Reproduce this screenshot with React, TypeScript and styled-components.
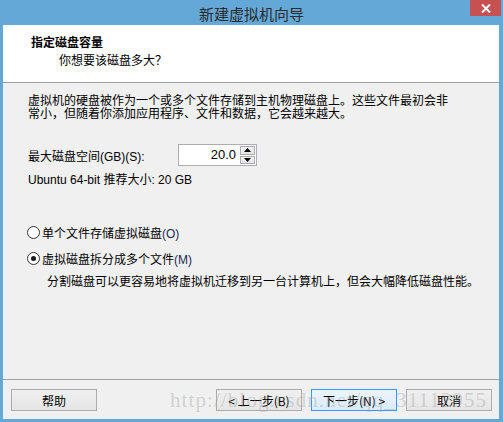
import React, { useState } from 'react';
import styled, { createGlobalStyle } from 'styled-components';

const GlobalStyle = createGlobalStyle`
  html, body {
    margin: 0;
    padding: 0;
    background: #ffffff;
  }
  body {
    font-family: "Liberation Sans", "Noto Sans CJK SC", sans-serif;
    font-size: 12px;
    color: #000;
  }
`;

const Window = styled.div`
  position: relative;
  width: 503px;
  height: 422px;
  box-sizing: border-box;
  background: #64a8d8;
  padding: 0 4px 3px 3px;
  display: flex;
  flex-direction: column;
  overflow: hidden;
`;

const TitleBar = styled.div`
  height: 25px;
  display: flex;
  align-items: center;
  justify-content: center;
  margin-left: -3px;
  margin-right: -4px;
`;

const Title = styled.div`
  font-family: "Noto Sans CJK SC", sans-serif;
  font-size: 15px;
  color: #2b2b2b;
  line-height: 25px;
  padding-top: 1px;
`;

const CloseButton = styled.div`
  position: absolute;
  top: 0;
  right: 2px;
  width: 31px;
  height: 16px;
  background: #c75050;
  display: flex;
  align-items: center;
  justify-content: center;
`;

const Client = styled.div`
  flex: 1;
  background: #f0f0f0;
  display: flex;
  flex-direction: column;
`;

const Header = styled.div`
  height: 58px;
  box-sizing: border-box;
  background: #ffffff;
  border-bottom: 1px solid #a0a0a0;
  padding: 9px 0 0 28px;
`;

const Heading = styled.div`
  font-family: "Noto Sans CJK SC", sans-serif;
  font-weight: bold;
  font-size: 12px;
  line-height: 16px;
`;

const SubHeading = styled.div`
  font-family: "Noto Sans CJK SC", sans-serif;
  font-size: 12px;
  line-height: 16px;
  margin: 2px 0 0 28px;
`;

const Body = styled.div`
  flex: 1;
  padding: 10px 0 0 25px;
  display: flex;
  flex-direction: column;
`;

const Paragraph = styled.div`
  font-family: "Noto Sans CJK SC", sans-serif;
  line-height: 13px;
  width: 426px;
`;

const FieldRow = styled.div`
  display: flex;
  align-items: center;
  margin-top: 25px;
  height: 22px;
`;

const Label = styled.span<{ $width?: number }>`
  width: ${p => p.$width ?? 150}px;
  font-size: 12px;
`;

const SpinBox = styled.div`
  width: 79px;
  height: 22px;
  box-sizing: border-box;
  border: 1px solid #abadb3;
  background: #fff;
  display: flex;
  align-items: stretch;
`;

const SpinValue = styled.div`
  flex: 1;
  text-align: right;
  padding-right: 4px;
  font-size: 13px;
  line-height: 20px;
  color: #000;
`;

const SpinButtons = styled.div`
  width: 15px;
  display: flex;
  flex-direction: column;
  gap: 1px;
  padding: 1px 1px 1px 0;
`;

const SpinButton = styled.div`
  flex: 1;
  border: 1px solid #acacac;
  background: linear-gradient(#f2f2f2, #e5e5e5);
  display: flex;
  align-items: center;
  justify-content: center;
`;

const Hint = styled.div`
  margin-top: 7px;
  line-height: 14px;
  font-size: 12px;
`;

const RadioRow = styled.label<{ $gap: number }>`
  display: flex;
  align-items: center;
  height: 16px;
  margin-top: ${p => p.$gap}px;
  margin-left: -1px;
  cursor: default;
`;

const RadioCircle = styled.span<{ $checked: boolean }>`
  width: 13px;
  height: 13px;
  box-sizing: border-box;
  border-radius: 50%;
  border: 1px solid #333;
  background: #fff;
  margin-right: 2px;
  display: flex;
  align-items: center;
  justify-content: center;
  &::after {
    content: '';
    width: 5px;
    height: 5px;
    border-radius: 50%;
    background: #1a1a1a;
    display: ${p => (p.$checked ? 'block' : 'none')};
  }
`;

const RadioText = styled.span`
  font-family: "Noto Sans CJK SC", sans-serif;
  font-size: 12px;
`;

const Mnemonic = styled.span`
  font-family: "Liberation Sans", sans-serif;
  color: #1c2a55;
`;

const Description = styled.div`
  font-family: "Noto Sans CJK SC", sans-serif;
  margin: 8px 0 0 19px;
  line-height: 14px;
`;

const Footer = styled.div`
  border-top: 1px solid #a0a0a0;
  height: 40px;
  box-sizing: border-box;
  padding: 9px 7px 0 8px;
  display: flex;
  align-items: flex-start;
`;

const Button = styled.div<{ $focused?: boolean; $ml?: number }>`
  width: 86px;
  height: 22px;
  box-sizing: border-box;
  border: 1px solid ${p => (p.$focused ? '#3399ff' : '#acacac')};
  background: ${p => (p.$focused ? 'linear-gradient(#ecf4fc, #dcecfc)' : 'linear-gradient(#f0f0f0, #e5e5e5)')};
  margin-left: ${p => p.$ml ?? 0}px;
  display: flex;
  align-items: center;
  justify-content: center;
  font-family: "Noto Sans CJK SC", sans-serif;
  font-size: 12px;
`;

const Watermark = styled.div`
  position: absolute;
  left: 170px;
  top: 388px;
  font-family: "Liberation Serif", serif;
  font-size: 21px;
  letter-spacing: 1.1px;
  color: rgba(150, 150, 150, 0.35);
  pointer-events: none;
  white-space: nowrap;
`;

function Triangle({ up }: { up: boolean }) {
  return (
    <svg width="7" height="4" viewBox="0 0 7 4">
      <path d={up ? 'M3.5 0 L7 4 L0 4 Z' : 'M0 0 L7 0 L3.5 4 Z'} fill="#000" />
    </svg>
  );
}

export default function App() {
  const [mode, setMode] = useState<'single' | 'split'>('split');

  return (
    <>
      <GlobalStyle />
      <Window>
        <TitleBar>
          <Title>新建虚拟机向导</Title>
        </TitleBar>
        <CloseButton>
          <svg width="10" height="9" viewBox="0 0 10 9">
            <path d="M1 0.5 L9 8.5 M9 0.5 L1 8.5" stroke="#fff" strokeWidth="2" />
          </svg>
        </CloseButton>
        <Client>
          <Header>
            <Heading>指定磁盘容量</Heading>
            <SubHeading>你想要该磁盘多大？</SubHeading>
          </Header>
          <Body>
            <Paragraph>
              虚拟机的硬盘被作为一个或多个文件存储到主机物理磁盘上。这些文件最初会非常小，但随着你添加应用程序、文件和数据，它会越来越大。
            </Paragraph>
            <FieldRow>
              <Label $width={150}>最大磁盘空间(GB)(S):</Label>
              <SpinBox>
                <SpinValue>20.0</SpinValue>
                <SpinButtons>
                  <SpinButton>
                    <Triangle up />
                  </SpinButton>
                  <SpinButton>
                    <Triangle up={false} />
                  </SpinButton>
                </SpinButtons>
              </SpinBox>
            </FieldRow>
            <Hint>Ubuntu 64-bit 推荐大小: 20 GB</Hint>
            <RadioRow $gap={37} onClick={() => setMode('single')}>
              <RadioCircle $checked={mode === 'single'} />
              <RadioText>
                单个文件存储虚拟磁盘<Mnemonic>(O)</Mnemonic>
              </RadioText>
            </RadioRow>
            <RadioRow $gap={10} onClick={() => setMode('split')}>
              <RadioCircle $checked={mode === 'split'} />
              <RadioText>
                虚拟磁盘拆分成多个文件<Mnemonic>(M)</Mnemonic>
              </RadioText>
            </RadioRow>
            <Description>
              分割磁盘可以更容易地将虚拟机迁移到另一台计算机上，但会大幅降低磁盘性能。
            </Description>
          </Body>
          <Footer>
            <Button>帮助</Button>
            <Button $ml={119}>&lt; 上一步(B)</Button>
            <Button $ml={9} $focused>下一步(N) &gt;</Button>
            <Button $ml={9}>取消</Button>
          </Footer>
        </Client>
        <Watermark>http://blog.csdn.net/qq_31112955</Watermark>
      </Window>
    </>
  );
}
